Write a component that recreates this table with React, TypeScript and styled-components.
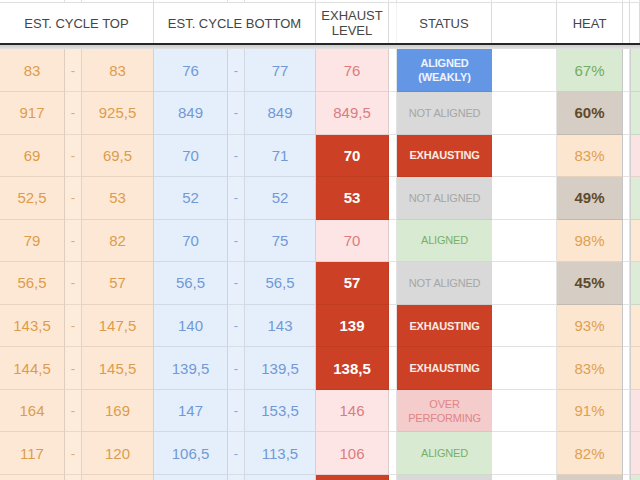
import React from "react";
import styled, { createGlobalStyle, css } from "styled-components";

const GlobalStyle = createGlobalStyle`
  html, body { margin: 0; padding: 0; background: #fff; overflow: hidden; }
  body { font-family: "Liberation Sans", Arial, sans-serif; }
`;

const COLUMNS = "65px 17px 72px 74px 17px 71px 73px 8px 95px 65px 66px 7px 10px";

type Tone = "peach" | "blue" | "pink" | "red" | "white";
type StatusKind = "weak" | "not" | "exhaust" | "aligned" | "over";
type HeatKind = "green" | "gray" | "peach";
type EdgeKind = "green" | "pink" | "peach";

const toneBg: Record<Tone, string> = {
  peach: "#fde8d5",
  blue: "#e5effb",
  pink: "#fde5e5",
  red: "#cc4125",
  white: "#ffffff",
};
const toneFg: Record<Tone, string> = {
  peach: "#dd9c4c",
  blue: "#7199d6",
  pink: "#dc7c7f",
  red: "#ffffff",
  white: "#444",
};

const Sheet = styled.div`
  width: 640px;
  height: 480px;
  overflow: hidden;
  display: flex;
  flex-direction: column;
`;

const Row = styled.div<{ $h: number }>`
  display: grid;
  grid-template-columns: ${COLUMNS};
  height: ${(p) => p.$h}px;
  flex: none;
`;

const StripCell = styled.div`
  box-sizing: border-box;
  border-right: 1px solid #e0e0e0;
  border-bottom: 1px solid #e0e0e0;
`;

const HeaderCell = styled.div<{ $span?: number; $open?: boolean }>`
  box-sizing: border-box;
  grid-column: span ${(p) => p.$span ?? 1};
  border-right: 1px solid ${(p) => (p.$open ? "#f2f2f2" : "#dadada")};
  display: flex;
  align-items: center;
  justify-content: center;
  text-align: center;
  color: #454545;
  font-size: 13px;
  line-height: 15px;
  text-transform: uppercase;
`;

const FreezeLine = styled.div`
  height: 2px;
  background: #262626;
  flex: none;
`;

const FreezeShadow = styled.div`
  height: 4px;
  background: linear-gradient(#cdcdcd, #e2e2e2);
  flex: none;
`;

const Cell = styled.div<{ $tone: Tone; $bold?: boolean; $dash?: boolean }>`
  box-sizing: border-box;
  display: flex;
  align-items: center;
  justify-content: center;
  background: ${(p) => toneBg[p.$tone]};
  color: ${(p) => toneFg[p.$tone]};
  font-size: 15px;
  font-weight: ${(p) => (p.$bold ? 700 : 400)};
  border-right: 1px solid
    ${(p) => (p.$tone === "white" ? "#e2e2e2" : p.$tone === "red" ? "rgba(0,0,0,0.06)" : "rgba(0,0,0,0.11)")};
  border-bottom: 1px solid
    ${(p) => (p.$tone === "white" ? "#e2e2e2" : p.$tone === "red" ? "rgba(0,0,0,0.06)" : "rgba(0,0,0,0.09)")};
  ${(p) =>
    p.$dash &&
    css`
      font-size: 13px;
      opacity: 0.85;
    `}
`;

const statusStyles: Record<StatusKind, { bg: string; fg: string; bold: boolean }> = {
  weak: { bg: "#6496e6", fg: "#eef3ff", bold: true },
  not: { bg: "#d9d9d9", fg: "#a6a6a6", bold: false },
  exhaust: { bg: "#cc4125", fg: "#fbe9e4", bold: true },
  aligned: { bg: "#d9ead3", fg: "#78b063", bold: false },
  over: { bg: "#f4cccc", fg: "#df8585", bold: false },
};

const StatusCell = styled.div<{ $kind: StatusKind }>`
  box-sizing: border-box;
  display: flex;
  align-items: center;
  justify-content: center;
  text-align: center;
  white-space: pre-line;
  font-size: 11px;
  line-height: 14px;
  letter-spacing: -0.2px;
  background: ${(p) => statusStyles[p.$kind].bg};
  color: ${(p) => statusStyles[p.$kind].fg};
  font-weight: ${(p) => (statusStyles[p.$kind].bold ? 700 : 400)};
  border-bottom: 1px solid rgba(0, 0, 0, 0.06);
`;

const heatStyles: Record<HeatKind, { bg: string; fg: string; bold: boolean }> = {
  green: { bg: "#d9ead3", fg: "#72ad5b", bold: false },
  gray: { bg: "#d6cdc4", fg: "#5f4b2c", bold: true },
  peach: { bg: "#fde6cf", fg: "#e0a050", bold: false },
};

const HeatCell = styled.div<{ $kind: HeatKind }>`
  box-sizing: border-box;
  display: flex;
  align-items: center;
  justify-content: center;
  font-size: 15px;
  background: ${(p) => heatStyles[p.$kind].bg};
  color: ${(p) => heatStyles[p.$kind].fg};
  font-weight: ${(p) => (heatStyles[p.$kind].bold ? 700 : 400)};
  border-right: 1px solid #c6c6c6;
  border-bottom: 1px solid rgba(0, 0, 0, 0.09);
`;

const edgeBg: Record<EdgeKind, string> = {
  green: "#dcecd6",
  pink: "#fbe3e3",
  peach: "#fde8d4",
};

const EdgeCell = styled.div<{ $kind: EdgeKind }>`
  box-sizing: border-box;
  background: ${(p) => edgeBg[p.$kind]};
  border-left: 1px solid #d0d0d0;
  border-bottom: 1px solid rgba(0, 0, 0, 0.08);
`;

type RowData = {
  top: [string, string];
  bottom: [string, string];
  level: string;
  red: boolean;
  status: StatusKind;
  heat: string;
  heatKind: HeatKind;
  edge: EdgeKind;
  hidden?: boolean;
};

const statusLabel: Record<StatusKind, string> = {
  weak: "ALIGNED\n(WEAKLY)",
  not: "NOT ALIGNED",
  exhaust: "EXHAUSTING",
  aligned: "ALIGNED",
  over: "OVER\nPERFORMING",
};

const rows: RowData[] = [
  { top: ["83", "83"], bottom: ["76", "77"], level: "76", red: false, status: "weak", heat: "67%", heatKind: "green", edge: "green" },
  { top: ["917", "925,5"], bottom: ["849", "849"], level: "849,5", red: false, status: "not", heat: "60%", heatKind: "gray", edge: "green" },
  { top: ["69", "69,5"], bottom: ["70", "71"], level: "70", red: true, status: "exhaust", heat: "83%", heatKind: "peach", edge: "pink" },
  { top: ["52,5", "53"], bottom: ["52", "52"], level: "53", red: true, status: "not", heat: "49%", heatKind: "gray", edge: "green" },
  { top: ["79", "82"], bottom: ["70", "75"], level: "70", red: false, status: "aligned", heat: "98%", heatKind: "peach", edge: "peach" },
  { top: ["56,5", "57"], bottom: ["56,5", "56,5"], level: "57", red: true, status: "not", heat: "45%", heatKind: "gray", edge: "green" },
  { top: ["143,5", "147,5"], bottom: ["140", "143"], level: "139", red: true, status: "exhaust", heat: "93%", heatKind: "peach", edge: "peach" },
  { top: ["144,5", "145,5"], bottom: ["139,5", "139,5"], level: "138,5", red: true, status: "exhaust", heat: "83%", heatKind: "peach", edge: "peach" },
  { top: ["164", "169"], bottom: ["147", "153,5"], level: "146", red: false, status: "over", heat: "91%", heatKind: "peach", edge: "pink" },
  { top: ["117", "120"], bottom: ["106,5", "113,5"], level: "106", red: false, status: "aligned", heat: "82%", heatKind: "peach", edge: "pink" },
  { top: ["", ""], bottom: ["", ""], level: "", red: true, status: "not", heat: "", heatKind: "gray", edge: "green", hidden: true },
];

const ROW_H = [43, 42.55, 42.55, 42.55, 42.55, 42.55, 42.55, 42.55, 42.55, 42.55, 42.55];

export default function App() {
  return (
    <>
      <GlobalStyle />
      <Sheet>
        <Row $h={3}>
          {Array.from({ length: 13 }).map((_, i) => (
            <StripCell key={i} />
          ))}
        </Row>
        <Row $h={40}>
          <HeaderCell $span={3}>Est. Cycle Top</HeaderCell>
          <HeaderCell $span={3}>Est. Cycle Bottom</HeaderCell>
          <HeaderCell>
            Exhaust
            <br />
            Level
          </HeaderCell>
          <HeaderCell $open />
          <HeaderCell>Status</HeaderCell>
          <HeaderCell />
          <HeaderCell>Heat</HeaderCell>
          <HeaderCell />
          <HeaderCell />
        </Row>
        <FreezeLine />
        <FreezeShadow />
        {rows.map((r, i) => (
          <Row key={i} $h={ROW_H[i]}>
            <Cell $tone="peach">{r.top[0]}</Cell>
            <Cell $tone="peach" $dash>{r.hidden ? "" : "-"}</Cell>
            <Cell $tone="peach">{r.top[1]}</Cell>
            <Cell $tone="blue">{r.bottom[0]}</Cell>
            <Cell $tone="blue" $dash>{r.hidden ? "" : "-"}</Cell>
            <Cell $tone="blue">{r.bottom[1]}</Cell>
            <Cell $tone={r.red ? "red" : "pink"} $bold={r.red}>
              {r.level}
            </Cell>
            <Cell $tone="white" />
            <StatusCell $kind={r.status}>{r.hidden ? "" : statusLabel[r.status]}</StatusCell>
            <Cell $tone="white" />
            <HeatCell $kind={r.heatKind}>{r.heat}</HeatCell>
            <Cell $tone="white" />
            <EdgeCell $kind={r.edge} />
          </Row>
        ))}
      </Sheet>
    </>
  );
}
